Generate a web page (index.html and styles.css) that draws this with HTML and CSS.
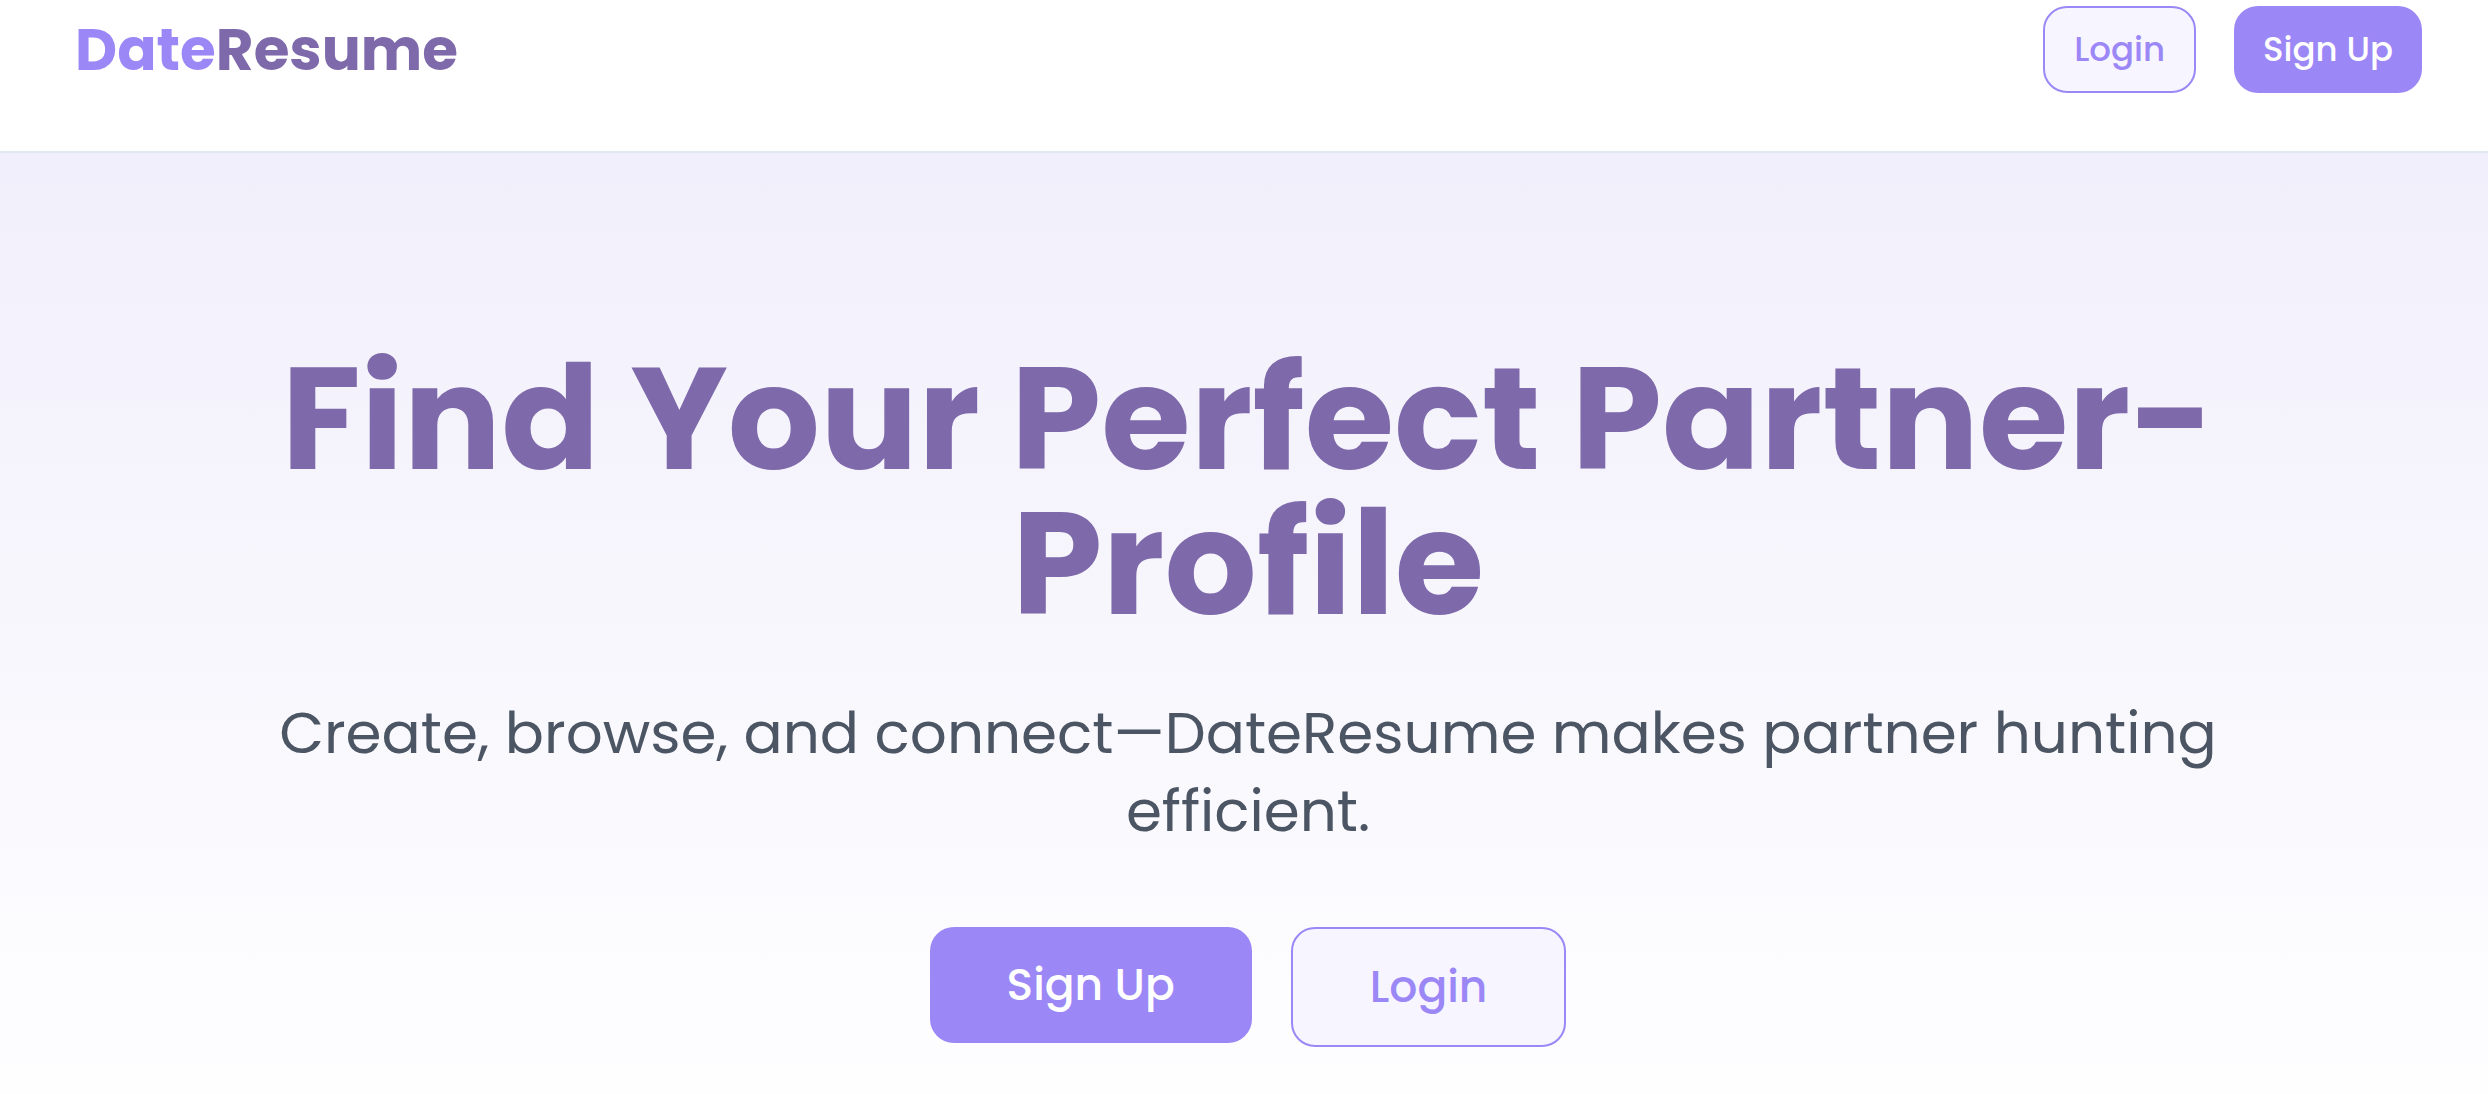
FILE: index.html
```html
<!DOCTYPE html>
<html lang="en">
<head>
<meta charset="utf-8">
<meta name="viewport" content="width=device-width, initial-scale=1">
<title>DateResume</title>
<link rel="stylesheet" href="styles.css">
</head>
<body>
<header class="site-header">
  <a class="brand" href="#"><span class="brand-accent">Date</span>Resume</a>
  <nav class="nav-actions" aria-label="Account">
    <button class="btn btn-outline" type="button">Login</button>
    <button class="btn btn-solid" type="button">Sign Up</button>
  </nav>
</header>
<main class="hero">
  <h1 class="hero-title">Find Your Perfect Partner-<br>Profile</h1>
  <p class="hero-text">Create, browse, and connect—DateResume makes partner hunting<br>efficient.</p>
  <div class="hero-actions">
    <button class="btn btn-large btn-solid" type="button">Sign Up</button>
    <button class="btn btn-large btn-outline" type="button">Login</button>
  </div>
</main>
</body>
</html>
```

FILE: styles.css
```css
* { box-sizing: border-box; }

body {
  margin: 0;
  min-height: 100vh;
  display: flex;
  flex-direction: column;
  background: #fff;
  font-family: Poppins, Inter, "Open Sans", sans-serif;
}

.site-header {
  display: flex;
  justify-content: space-between;
  align-items: center;
  padding: 6px 66px 58px 75px;
  border-bottom: 2px solid #e2e8f0;
}

.brand {
  color: #7e69ab;
  font-size: 58px;
  font-weight: 700;
  line-height: 82px;
  text-decoration: none;
}

.brand-accent { color: #9b87f5; }

.nav-actions { display: flex; gap: 38px; }

.btn {
  min-height: 87px;
  padding: 0 29px;
  border: 0;
  border-radius: 24px;
  font-family: inherit;
  font-size: 34px;
  font-weight: 500;
  white-space: nowrap;
}

.btn-solid { background: #9b87f5; color: #fff; }

.btn-outline {
  border: 2px solid #9b87f5;
  background: #f7f5ff;
  color: #9b87f5;
}

.hero {
  flex: 1;
  padding: 193px 68px 46px 76px;
  background: linear-gradient(#f1effb, #fefeff);
  text-align: center;
}

.hero-title {
  margin: 0;
  color: #7e69ab;
  font-size: 145px;
  font-weight: 700;
  line-height: 145px;
}

.hero-text {
  margin: 58px 0 0;
  color: #4b5563;
  font-size: 58px;
  line-height: 78px;
}

.hero-actions {
  display: flex;
  justify-content: center;
  align-items: flex-start;
  gap: 39px;
  margin-top: 77px;
}

.btn-large { padding: 0 77px; font-size: 44px; line-height: 116px; }
```
